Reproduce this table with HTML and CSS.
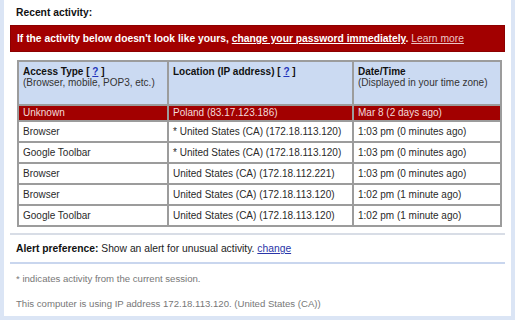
FILE: index.html
```html
<!DOCTYPE html>
<html>
<head>
<meta charset="utf-8">
<link rel="stylesheet" href="styles.css">
</head>
<body>
<div class="frame">
  <div class="title">Recent activity:</div>
  <div class="warning">If the activity below doesn't look like yours, <a class="warn-link" href="#">change your password immediately</a>. <a class="learn" href="#">Learn more</a></div>
  <table class="activity">
    <colgroup><col class="c1"><col class="c2"><col class="c3"></colgroup>
    <tr class="head">
      <th><b>Access Type [ <a class="q" href="#">?</a> ]</b><span class="sub">(Browser, mobile, POP3, etc.)</span></th>
      <th><b>Location (IP address) [ <a class="q" href="#">?</a> ]</b></th>
      <th><b>Date/Time</b><span class="sub">(Displayed in your time zone)</span></th>
    </tr>
    <tr class="bad"><td>Unknown</td><td>Poland (83.17.123.186)</td><td>Mar 8 (2 days ago)</td></tr>
    <tr><td>Browser</td><td>* United States (CA) (172.18.113.120)</td><td>1:03 pm (0 minutes ago)</td></tr>
    <tr><td>Google Toolbar</td><td>* United States (CA) (172.18.113.120)</td><td>1:03 pm (0 minutes ago)</td></tr>
    <tr><td>Browser</td><td>United States (CA) (172.18.112.221)</td><td>1:03 pm (0 minutes ago)</td></tr>
    <tr><td>Browser</td><td>United States (CA) (172.18.113.120)</td><td>1:02 pm (1 minute ago)</td></tr>
    <tr><td>Google Toolbar</td><td>United States (CA) (172.18.113.120)</td><td>1:02 pm (1 minute ago)</td></tr>
  </table>
  <div class="pref"><b>Alert preference:</b> Show an alert for unusual activity. <a class="change" href="#">change</a></div>
  <p class="note">* indicates activity from the current session.</p>
  <p class="note second">This computer is using IP address 172.18.113.120. (United States (CA))</p>
</div>
</body>
</html>
```
FILE: styles.css
```css
html, body {
  margin: 0;
  padding: 0;
  background: #ffffff;
}
.frame {
  box-sizing: border-box;
  width: 515px;
  height: 320px;
  border-left: 4px solid #dbe5f5;
  border-right: 4px solid #dbe5f5;
  border-bottom: 4px solid #dbe5f5;
  font-family: "Liberation Sans", Arial, sans-serif;
  color: #222;
  overflow: hidden;
}
.title {
  font-weight: bold;
  font-size: 10.3px;
  line-height: 12px;
  padding: 7px 0 0 12px;
  color: #111;
}
.warning {
  margin: 6px 6px 0 6px;
  height: 27px;
  box-sizing: border-box;
  background: #a20000;
  border: 1px solid #8c0000;
  color: #ffffff;
  font-weight: bold;
  font-size: 10.3px;
  line-height: 25px;
  padding-left: 6px;
  white-space: nowrap;
}
.warn-link {
  color: #ffffff;
  text-decoration: underline;
}
.learn {
  color: #ecc6c6;
  font-weight: normal;
  text-decoration: underline;
}
.activity {
  margin: 8px 0 0 13px;
  width: 483px;
  border-collapse: collapse;
  border: 2px solid #9c9c9c;
  font-size: 10px;
  table-layout: fixed;
}
.c1 { width: 150px; }
.c2 { width: 185px; }
.c3 { width: 148px; }
.activity th, .activity td {
  border: 2px solid #9c9c9c;
  text-align: left;
  padding: 0 4px;
  white-space: nowrap;
  overflow: hidden;
}
.activity th {
  background: #cbdaf2;
  vertical-align: top;
  height: 38px;
  padding-top: 4px;
  font-weight: normal;
  line-height: 11px;
  color: #111;
}
.sub {
  display: block;
  color: #333;
}
.q {
  color: #2233bb;
  text-decoration: underline;
}
.activity td {
  height: 19px;
  line-height: 19px;
  color: #2a2a2a;
}
.bad td {
  background: #a20000;
  color: #f3dcdc;
  height: 14px;
  line-height: 14px;
}
.pref {
  margin: 6px 6px 0 6px;
  border-top: 2px solid #d8dde6;
  border-bottom: 2px solid #c9d6ee;
  padding: 0 0 0 6px;
  height: 27px;
  line-height: 27px;
  font-size: 10.3px;
  color: #222;
}
.pref b { color: #111; }
.change {
  color: #2a35a8;
  text-decoration: underline;
}
.note {
  margin: 9px 0 0 12px;
  font-size: 9.6px;
  line-height: 12px;
  color: #777;
}
.second {
  margin-top: 13px;
}
```
